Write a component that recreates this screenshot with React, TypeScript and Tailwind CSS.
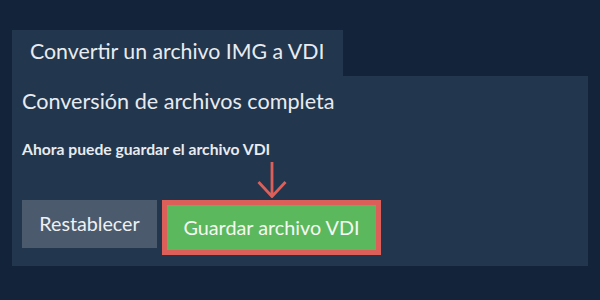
export default function App() {
  return (
    <div
      className="h-[300px] w-[600px] bg-[#12233a] px-3 pt-[30px]"
      style={{ fontFamily: "Lato, 'Noto Sans', sans-serif" }}
    >
      <div className="flex">
        <div className="h-[46px] w-[331px] bg-[#22364d] pl-[18px] pt-[7px] text-[21.3px] leading-[28px] text-[#e8ebef]">
          Convertir un archivo IMG a VDI
        </div>
      </div>
      <div className="h-[190px] bg-[#22364d] px-[10px] pt-[10px]">
        <h2 className="text-[21.6px] leading-[30px] text-[#e8ebef]">
          Conversión de archivos completa
        </h2>
        <p className="mt-[22px] text-[15.7px] font-bold leading-[22px] text-[#e8ebef]">
          Ahora puede guardar el archivo VDI
        </p>
        <div className="mt-[2px] flex items-start gap-[5px]">
          <button
            type="button"
            className="mt-[38px] h-[48px] w-[135px] bg-[#4b5b6d] text-[19.7px] text-[#eef0f2]"
          >
            Restablecer
          </button>
          <div className="flex flex-col items-center">
            <svg width="30" height="36" viewBox="0 0 30 36" className="mb-[2px]">
              <path
                d="M15 0 V34.5 M1.5 20 L15 34.5 L28.5 20"
                fill="none"
                stroke="#dd5f5a"
                strokeWidth="2.8"
              />
            </svg>
            <button
              type="button"
              className="h-[55px] w-[219px] border-[5px] border-[#dd5f5a] bg-[#5cb85c] text-[19.8px] text-[#f4f8f4]"
            >
              Guardar archivo VDI
            </button>
          </div>
        </div>
      </div>
    </div>
  );
}
